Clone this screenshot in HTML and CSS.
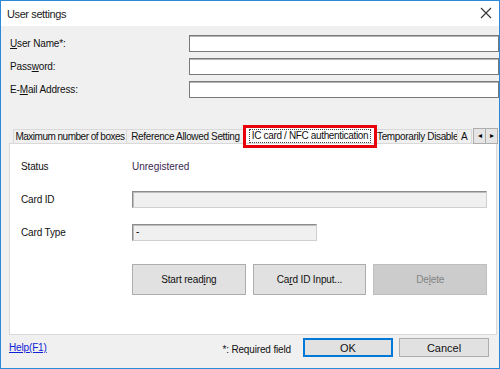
FILE: index.html
```html
<!DOCTYPE html>
<html lang="en">
<head>
    <meta charset="UTF-8">
    <title>User settings</title>
    <link rel="stylesheet" href="styles.css">
</head>
<body>
    <div class="window">
        <!-- Title bar -->
        <div class="titlebar">
            <span class="title">User settings</span>
            <svg class="close" width="12" height="12" viewBox="0 0 12 12">
                <path d="M1 1 L11 11 M11 1 L1 11" stroke="#333" stroke-width="1.1" fill="none"/>
            </svg>
        </div>

        <!-- User fields -->
        <div class="fields">
            <div class="field-row">
                <label><u>U</u>ser Name*:</label>
                <input type="text" class="text-input">
            </div>
            <div class="field-row">
                <label>Pass<u>w</u>ord:</label>
                <input type="password" class="text-input">
            </div>
            <div class="field-row">
                <label>E-<u>M</u>ail Address:</label>
                <input type="text" class="text-input">
            </div>
        </div>

        <!-- Tabs -->
        <div class="tab-strip">
            <div class="tab tab-boxes">Maximum number of boxes</div>
            <div class="tab tab-reference">Reference Allowed Setting</div>
            <div class="tab active"><span class="focus">IC card / NFC authentication</span></div>
            <div class="tab tab-disable">Temporarily Disable</div>
            <div class="tab clipped">A</div>
            <div class="scroll-buttons">
                <span class="scroll-btn">&#9666;</span>
                <span class="scroll-btn">&#9656;</span>
            </div>
        </div>

        <div class="panel">
            <div class="panel-row">
                <span class="panel-label">Status</span>
                <span class="status-value">Unregistered</span>
            </div>
            <div class="panel-row">
                <span class="panel-label">Card ID</span>
                <div class="readonly wide"></div>
            </div>
            <div class="panel-row">
                <span class="panel-label">Card Type</span>
                <div class="readonly narrow">-</div>
            </div>
            <div class="panel-buttons">
                <button class="btn">Start read<u>i</u>ng</button>
                <button class="btn">Ca<u>r</u>d ID Input...</button>
                <button class="btn" disabled>De<u>l</u>ete</button>
            </div>
        </div>

        <!-- Footer -->
        <div class="footer">
            <a class="help" href="#">Help(F1)</a>
            <span class="required">*: Required field</span>
            <button class="dlg-btn default">OK</button>
            <button class="dlg-btn">Cancel</button>
        </div>
    </div>
</body>
</html>
```

FILE: styles.css
```css
body {
    margin: 0;
    padding: 0;
    font-family: "Liberation Sans", Arial, sans-serif;
    font-size: 10px;
    letter-spacing: -0.15px;
    color: #000;
    background-color: #f0f0f0;
}
.window {
    width: 500px;
    height: 369px;
    box-sizing: border-box;
    border: 1px solid #2a8ad8;
    background-color: #f0f0f0;
    display: flex;
    flex-direction: column;
}
.titlebar {
    height: 25px;
    background-color: #fff;
    display: flex;
    align-items: center;
    justify-content: space-between;
    padding: 0 7px 0 6px;
}
.title {
    font-size: 11px;
    letter-spacing: -0.4px;
    color: #222;
}
.close {
    margin-top: -1px;
}
.fields {
    padding: 8px 0 0 9px;
    display: flex;
    flex-direction: column;
    gap: 5px;
}
.field-row {
    display: flex;
    align-items: center;
    height: 17px;
    padding-top: 1px;
}
.field-row label {
    width: 179px;
    color: #111;
}
.text-input {
    flex: 1;
    height: 17px;
    box-sizing: border-box;
    margin: -1px 0 0 0;
    border: 1px solid #7a7a7a;
    box-shadow: inset 0 1px 0 #b5b5b5;
    background-color: #fff;
    padding: 0 2px;
}
.tab-strip {
    margin-top: 29px;
    padding-left: 12px;
    height: 16px;
    display: flex;
    align-items: flex-end;
    position: relative;
}
.tab {
    box-sizing: border-box;
    height: 14px;
    line-height: 14px;
    border: 1px solid #d9d9d9;
    border-bottom: none;
    background-color: #f0f0f0;
    color: #111;
    white-space: nowrap;
    text-align: center;
    overflow: hidden;
    letter-spacing: -0.35px;
    margin-right: -1px;
}
.tab-boxes {
    width: 114px;
    letter-spacing: -0.5px;
}
.tab-reference {
    width: 119px;
}
.tab-disable {
    width: 82px;
}
.tab.active {
    width: 130px;
    height: 16px;
    line-height: 15px;
    background-color: #fff;
    margin: 0 1px;
    position: relative;
    overflow: visible;
    z-index: 1;
}
.tab.active::after {
    content: "";
    position: absolute;
    left: -3px;
    right: -3px;
    top: -3px;
    bottom: -5px;
    border: 3px solid #e8000b;
}
.focus {
    border: 1px dotted #444;
    padding: 0 2px;
    line-height: 12px;
    display: inline-block;
}
.tab.clipped {
    width: 15px;
    text-align: left;
    padding-left: 3px;
}
.scroll-buttons {
    display: flex;
    margin-left: auto;
    margin-right: 1px;
    align-self: flex-start;
    margin-top: 1px;
}
.scroll-btn {
    width: 11px;
    height: 14px;
    border: 1px solid #adadad;
    background-color: #e5e5e5;
    font-size: 8px;
    line-height: 14px;
    text-align: center;
    color: #000;
    margin-left: -1px;
}
.panel {
    margin: 0 2px 0 8px;
    height: 192px;
    box-sizing: border-box;
    background-color: #fff;
    border: 1px solid #d9d9d9;
    padding: 14px 9px 0 11px;
    display: flex;
    flex-direction: column;
}
.panel-row {
    display: flex;
    align-items: center;
    height: 17px;
    margin-bottom: 16px;
}
.panel-label {
    width: 111px;
    color: #111;
}
.status-value {
    color: #3b1f4f;
    letter-spacing: 0;
}
.readonly {
    height: 17px;
    box-sizing: border-box;
    border: 1px solid #8c8c8c;
    border-right-color: #cfcfcf;
    border-bottom-color: #cfcfcf;
    box-shadow: inset 1px 1px 0 #bdbdbd;
    background-color: #f0f0f0;
    padding-left: 3px;
    line-height: 14px;
}
.readonly.wide {
    flex: 1;
}
.readonly.narrow {
    width: 185px;
}
.panel-buttons {
    display: flex;
    gap: 7px;
    margin-left: 111px;
    margin-top: 7px;
}
.btn {
    width: 114px;
    height: 31px;
    font-family: "Liberation Sans", Arial, sans-serif;
    font-size: 10px;
    letter-spacing: -0.15px;
    background-color: #e1e1e1;
    border: 1px solid #adadad;
    color: #111;
    padding: 0;
}
.btn:disabled {
    background-color: #cccccc;
    border-color: #bfbfbf;
    color: #838383;
}
.footer {
    display: flex;
    align-items: center;
    padding: 3px 10px 0 8px;
    height: 19px;
}
.help {
    color: #0f22d6;
    text-decoration: underline;
}
.required {
    margin-left: auto;
    margin-right: 12px;
    color: #111;
    padding-top: 3px;
}
.dlg-btn {
    width: 90px;
    height: 19px;
    font-family: "Liberation Sans", Arial, sans-serif;
    font-size: 11px;
    background-color: #e1e1e1;
    border: 1px solid #adadad;
    color: #111;
    padding: 0;
    margin-left: 6px;
}
.dlg-btn.default {
    border-color: #0078d7;
    box-shadow: inset 0 0 0 1px #0078d7;
    margin-left: 0;
}
```
